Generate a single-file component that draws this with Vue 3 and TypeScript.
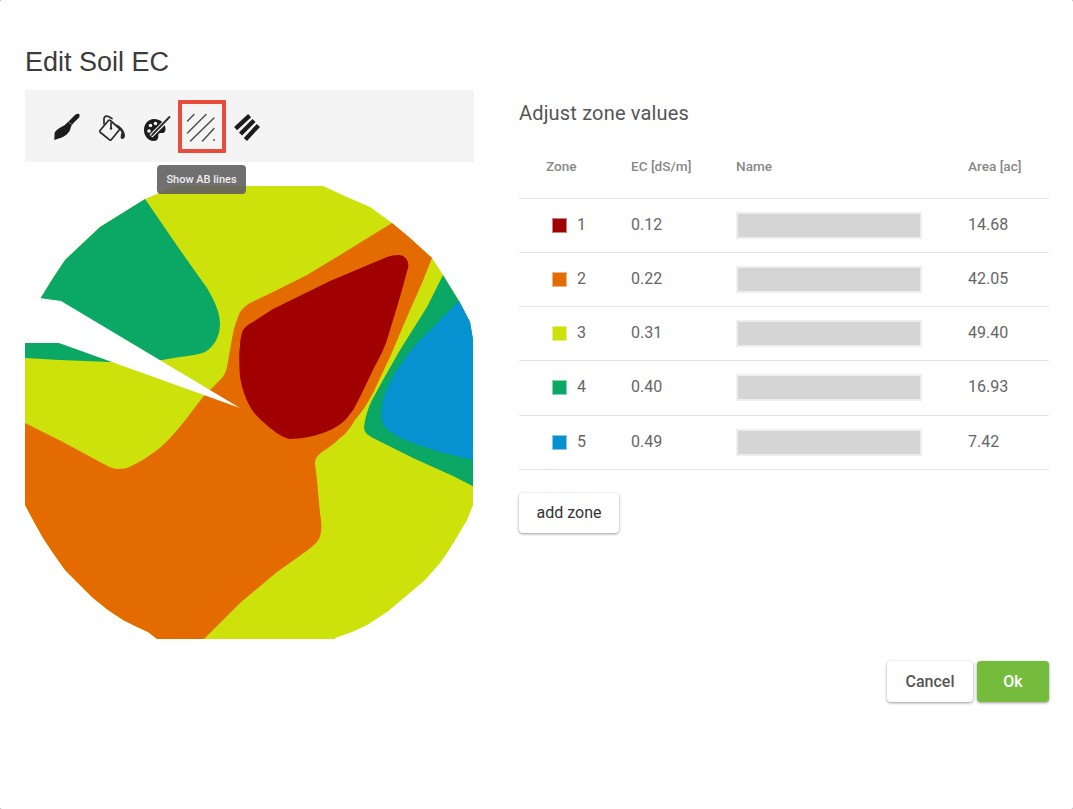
<script setup lang="ts">
interface Row { id: number; ec: string; area: string; color: string }

const colors = {
  red: '#a00000',
  orange: '#e46b00',
  yellow: '#cce20a',
  green: '#0aa864',
  blue: '#0691d0'
}

const rows: Row[] = [
  { id: 1, ec: '0.12', area: '14.68', color: colors.red },
  { id: 2, ec: '0.22', area: '42.05', color: colors.orange },
  { id: 3, ec: '0.31', area: '49.40', color: colors.yellow },
  { id: 4, ec: '0.40', area: '16.93', color: colors.green },
  { id: 5, ec: '0.49', area: '7.42', color: colors.blue }
]

const outline =
  'M145 199 L157 194 L175 186 L323 186 L347 197 L370 207 L392 223 L410 238 L432 258 L443 275 L459 301 L470 322 L473 340 L473 505 L467 520 L457 537 L447 553 L440 563 L425 580 L405 597 L387 612 L367 625 L352 632 L335 638 L335 639 L157 639 L148 632 L137 627 L123 620 L108 610 L93 598 L78 583 L65 570 L53 553 L43 538 L33 520 L25 505 L25 343 L40 299 L53 278 L65 260 L83 243 L100 227 Z'

const notch = 'M39 298 L61 301 L240 408 L59 343 L24 343 L24 298 Z'

const shapes: { d: string; fill: string }[] = [
  { fill: colors.yellow, d: 'M0 162 H480 V660 H0 Z' },
  {
    fill: colors.green,
    d: 'M145 199 L0 199 L0 358 L25 358 L60 360 L110 362 L162 360 L180 357 C188 356 197 355 205 352 C215 346 220 335 220 324 C220 312 214 300 207 288 L180 250 Z'
  },
  {
    fill: colors.orange,
    d: 'M392 223 L440 250 L432 258 L422 283 L407 317 L390 357 L373 393 C368 403 362 412 355 420 C350 428 346 434 340 438 C334 444 328 448 322 452 C317 456 315 459 315 464 L317 480 L320 513 C322 525 322 532 319 539 C315 546 305 552 277 572 L240 603 L204 639 L204 660 L0 660 L0 411 L25 423 L63 442 L100 462 C108 466 112 469 118 469 C124 469 128 468 133 465 C140 462 146 458 153 453 C170 442 185 420 203 397 L220 380 C224 376 226 372 227 367 L233 333 C234 328 236 322 238 317 C240 311 243 308 247 305 L250 303 L273 292 L307 275 L340 255 Z'
  },
  {
    fill: colors.red,
    d: 'M243 330 C246 326 249 324 253 322 L273 309 L330 281 L387 257 C393 255 399 254 403 256 C408 259 409 264 408 268 L400 297 L387 340 C383 352 378 360 373 370 L360 397 C356 405 353 411 350 414 C345 422 335 429 323 433 C315 436 300 439 290 439 C283 438 277 433 270 428 C262 421 256 416 252 410 C247 402 242 390 240 377 C239 365 239 350 240 347 C240 340 241 335 243 330 Z'
  },
  {
    fill: colors.green,
    d: 'M443 275 L427 307 L400 350 L383 380 C378 389 375 395 372 400 C368 408 365 418 364 427 C364 433 368 435 373 438 L413 458 L453 476 L480 490 L480 275 Z'
  },
  {
    fill: colors.blue,
    d: 'M459 301 L440 320 L417 343 C409 352 403 361 397 370 C390 381 384 394 382 405 C380 415 381 424 388 430 C396 436 404 440 413 443 C422 446 430 449 440 452 L480 462 L480 301 Z'
  }
]
</script>

<template>
  <div class="dialog">
    <h1 class="title">Edit Soil EC</h1>
    <div class="main">
      <section class="left">
        <div class="toolbar">
          <button class="tool" type="button" aria-label="Brush">
            <svg class="icon" viewBox="0 0 32 32">
              <path fill="#1c1c1c" d="M3.300 29L3.600 22C4.500 19.500 7 17.500 10.700 15.700C12.500 14.800 14.500 13.800 15.700 12.300L19 9L24 4C25.500 2.800 27.500 2.500 28.300 3.300C28.800 4.300 28.500 5.500 28.300 6.300L22.300 12.300C21.300 13.300 20.500 14.500 20 15.700C19.500 17.500 19 19.500 18 20.700C16.500 22.700 14.500 24.700 12.300 25.700C9.500 27 6 28 3.300 29Z" />
              <path fill="none" stroke="#f4f4f4" stroke-width="0.700" opacity="0.6" d="M17.300 10.800L21.300 14" />
            </svg>
          </button>
          <button class="tool" type="button" aria-label="Fill">
            <svg class="icon" viewBox="0 0 32 32">
              <path fill="none" stroke="#2a2a2a" stroke-width="1.700" stroke-linejoin="round" d="M4 19.500L12.500 9.500C13 9 13.800 9 14.300 9.500L24 18L15.500 28.500C15 29.200 14 29.300 13.300 28.700L4.500 21.500C3.800 20.900 3.600 20.100 4 19.500Z" />
              <path fill="none" stroke="#2a2a2a" stroke-width="1.700" stroke-linecap="round" d="M8 13V7.500C8 5.500 10.500 4.500 12.500 5.500L16 7.500M15 12V17" />
              <circle cx="15" cy="17.500" r="1.200" fill="#2a2a2a" />
              <path fill="#2a2a2a" d="M20 13.500C24 14.500 28.500 19 29 24C29.200 26.500 27.500 28 26.300 28C25 28 24.300 26.800 24.700 25L25.500 21L20.500 15.500Z" />
            </svg>
          </button>
          <button class="tool" type="button" aria-label="Palette">
            <svg class="icon" viewBox="0 0 32 32">
              <path fill="#1c1c1c" d="M13 8C19 8 24.500 12 24.500 18C24.500 21 23 22.500 20.500 22C18.500 21.600 17 22.500 17.300 24.500C17.500 27 16.500 30 13 30C7 30 3 25 3 19C3 13 7 8 13 8Z" />
              <circle cx="8" cy="20" r="1.800" fill="#f4f4f4" />
              <circle cx="9.500" cy="14.500" r="1.800" fill="#f4f4f4" />
              <circle cx="14.500" cy="12.500" r="1.800" fill="#f4f4f4" />
              <circle cx="19.500" cy="15" r="1.600" fill="#f4f4f4" />
              <path fill="none" stroke="#f4f4f4" stroke-width="4" d="M10 25L29 6" />
              <path fill="none" stroke="#2a2a2a" stroke-width="1.800" stroke-linecap="round" d="M11 24L28.500 6" />
            </svg>
          </button>
          <button class="tool selected" type="button" aria-label="Show AB lines">
            <svg class="icon" viewBox="0 0 32 32">
              <path fill="none" stroke="#4a4a4a" stroke-width="1.400" stroke-linecap="round" d="M1.500 10L8 3.500M1.500 22L20 3.500M4.500 30L28 7M16.500 30L28 17.500" />
              <circle cx="28" cy="29" r="0.900" fill="#4a4a4a" />
            </svg>
            <span class="marker"></span>
          </button>
          <button class="tool" type="button" aria-label="Hide AB lines">
            <svg class="icon" viewBox="0 0 32 32">
              <path fill="none" stroke="#1c1c1c" stroke-width="4.400" d="M4.600 17.600L18.600 4.600M9.500 23L23 9.500M14.400 28.400L27.400 14.400" />
            </svg>
          </button>
          <div class="tooltip">Show AB lines</div>
        </div>
        <svg class="map" viewBox="25 162 449 490">
          <defs>
            <clipPath id="field-outline">
              <path :d="outline" />
            </clipPath>
          </defs>
          <g clip-path="url(#field-outline)">
            <path v-for="(s, i) in shapes" :key="i" :d="s.d" :fill="s.fill" />
          </g>
          <path :d="notch" fill="#ffffff" />
        </svg>
      </section>

      <section class="right">
        <h2 class="subtitle">Adjust zone values</h2>
        <div class="row head">
          <div class="c-zone">Zone</div>
          <div>EC [dS/m]</div>
          <div>Name</div>
          <div>Area [ac]</div>
        </div>
        <div v-for="r in rows" :key="r.id" class="row body">
          <div class="c-zone">
            <span class="swatch" :style="{ background: r.color }"></span>
            <span>{{ r.id }}</span>
          </div>
          <div>{{ r.ec }}</div>
          <div><div class="name"></div></div>
          <div>{{ r.area }}</div>
        </div>
        <button class="btn add" type="button">add zone</button>
      </section>
    </div>
    <footer class="actions">
      <button class="btn cancel" type="button">Cancel</button>
      <button class="btn ok" type="button">Ok</button>
    </footer>
  </div>
</template>

<style scoped>
.dialog {
  box-sizing: border-box;
  width: 1073px;
  height: 809px;
  padding: 44px 24px 0 25px;
  background: #fff;
  border-radius: 2px;
  overflow: hidden;
  font-family: Roboto, sans-serif;
  color: #555;
}
.title {
  margin: 0 0 10px;
  height: 36px;
  font: 400 27px/36px "Liberation Sans", Arial, sans-serif;
  color: #3c3c3c;
}
.main {
  display: grid;
  grid-template-columns: 449px 530px;
  column-gap: 45px;
  height: 561px;
}
.left {
  display: flex;
  flex-direction: column;
}
.toolbar {
  position: relative;
  display: flex;
  height: 72px;
  padding-left: 20px;
  background: #f4f4f4;
}
.tool {
  position: relative;
  display: flex;
  align-items: center;
  justify-content: center;
  width: 44.800px;
  height: 72px;
  padding: 0;
  border: 0;
  background: none;
}
.icon {
  width: 32px;
  height: 32px;
  margin-top: 2px;
}
.marker {
  position: absolute;
  left: -1.400px;
  top: 10px;
  width: 48px;
  height: 53px;
  box-sizing: border-box;
  border: 4px solid #e74c3c;
  border-radius: 1px;
}
.tooltip {
  position: absolute;
  z-index: 2;
  left: 132px;
  top: 75px;
  width: 89px;
  height: 29px;
  border-radius: 4px;
  background: rgba(97, 97, 97, 0.9);
  color: #eee;
  font-size: 11px;
  font-weight: 500;
  line-height: 29px;
  text-align: center;
}
.map {
  display: block;
  width: 449px;
  height: 490px;
}
.subtitle {
  margin: 0;
  height: 46px;
  font-size: 20px;
  font-weight: 400;
  letter-spacing: 0.17px;
  line-height: 46px;
  color: #555;
}
.row {
  display: grid;
  grid-template-columns: 112px 105px 232px 81px;
  align-items: center;
  box-sizing: border-box;
  border-bottom: 1px solid #e3e3e3;
}
.head {
  height: 62.500px;
  padding-bottom: 1px;
  font-size: 13.600px;
  font-weight: 500;
  color: #888;
}
.body {
  height: 54.250px;
  padding-bottom: 2px;
  font-size: 16px;
  color: #666;
}
.c-zone {
  padding-left: 27px;
}
.body .c-zone {
  display: flex;
  align-items: center;
  gap: 10px;
  padding-left: 33px;
}
.swatch {
  width: 15px;
  height: 15px;
  margin-top: 2px;
  box-sizing: border-box;
  border: 1px solid rgba(255, 255, 255, 0.5);
}
.name {
  box-sizing: border-box;
  width: 186px;
  height: 27px;
  margin-top: 2px;
  border: 2px solid #eee;
  background: #d5d5d5;
}
.btn {
  display: block;
  padding: 0;
  border: 0;
  border-radius: 4px;
  background: #fff;
  font-family: Roboto, sans-serif;
  font-size: 16px;
  box-shadow: 0 1px 3px rgba(0, 0, 0, 0.4);
}
.add {
  width: 100px;
  height: 40px;
  margin-top: 23px;
  color: #333;
}
.actions {
  display: flex;
  justify-content: flex-end;
  gap: 4px;
  margin-top: 10px;
}
.cancel,
.ok {
  height: 41px;
  padding-bottom: 1px;
  font-weight: 500;
}
.cancel {
  width: 86px;
  color: #555;
}
.ok {
  width: 72px;
  background: #76bc3c;
  color: #fff;
}
</style>

<style>
html,
body {
  margin: 0;
  background: #aaa;
}
</style>
